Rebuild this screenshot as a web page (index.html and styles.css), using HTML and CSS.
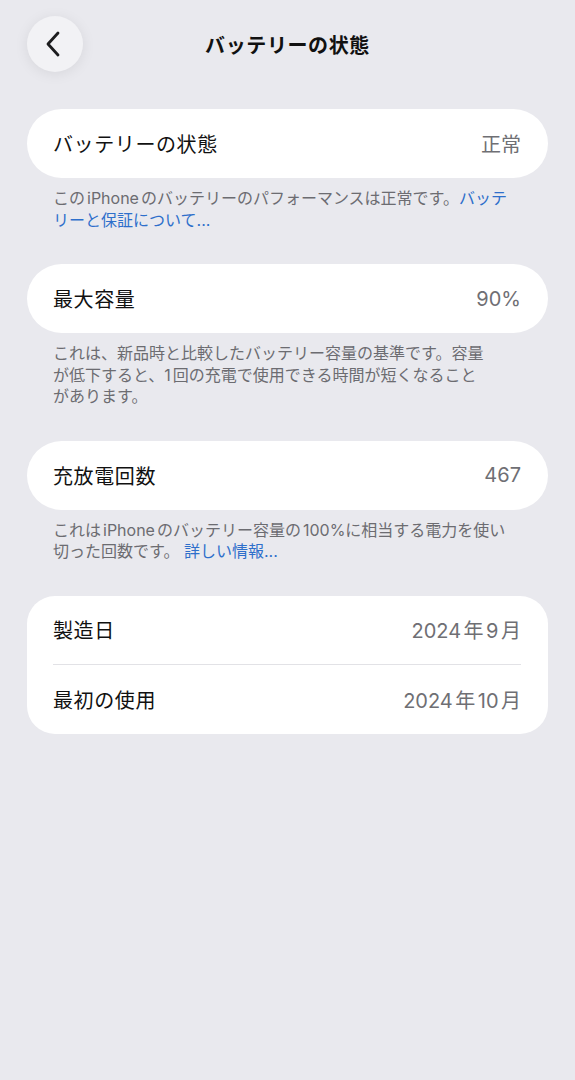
FILE: index.html
```html
<!DOCTYPE html>
<html lang="ja">
<head>
    <meta charset="utf-8">
    <link rel="stylesheet" href="styles.css">
</head>
<body>
    <div class="header">
        <button class="back-btn" type="button">
            <svg width="18" height="26" viewBox="0 0 18 26">
                <path d="M13 2 L3 13 L13 24" fill="none" stroke="#1c1c1e" stroke-width="2.8" stroke-linecap="round" stroke-linejoin="round"/>
            </svg>
        </button>
        <h1 class="title">バッテリーの状態</h1>
    </div>

    <div class="content">
        <div class="card">
            <div class="row">
                <span class="label">バッテリーの状態</span>
                <span class="value">正常</span>
            </div>
        </div>
        <p class="note">このiPhoneのバッテリーのパフォーマンスは正常です。<a href="#">バッテ<br>リーと保証について...</a></p>

        <div class="card">
            <div class="row">
                <span class="label">最大容量</span>
                <span class="value">90%</span>
            </div>
        </div>
        <p class="note">これは、新品時と比較したバッテリー容量の基準です。容量<br>が低下すると、1回の充電で使用できる時間が短くなること<br>があります。</p>

        <div class="card">
            <div class="row">
                <span class="label">充放電回数</span>
                <span class="value">467</span>
            </div>
        </div>
        <p class="note">これはiPhoneのバッテリー容量の100%に相当する電力を使い<br>切った回数です。 <a href="#">詳しい情報...</a></p>

        <div class="card card-group">
            <div class="row">
                <span class="label">製造日</span>
                <span class="value">2024年9月</span>
            </div>
            <div class="row">
                <span class="label">最初の使用</span>
                <span class="value">2024年10月</span>
            </div>
        </div>
    </div>
</body>
</html>
```

FILE: styles.css
```css
body {
    margin: 0;
    background-color: #e9e9ee;
    font-family: Inter, "Noto Sans CJK JP", sans-serif;
    color: #111;
    text-autospace: normal;
}

/* Top bar */
.header {
    position: relative;
    height: 88px;
    display: flex;
    align-items: center;
    justify-content: center;
}

.back-btn {
    position: absolute;
    left: 27px;
    top: 16px;
    width: 56px;
    height: 56px;
    border: none;
    border-radius: 50%;
    background-color: #f2f2f5;
    box-shadow: 0px 2px 14px rgba(0, 0, 0, 0.08);
    display: flex;
    align-items: center;
    justify-content: center;
    padding: 0 3px 0 0;
}

.title {
    margin: 0;
    font-size: 20px;
    font-weight: 700;
    letter-spacing: 0.6px;
}

/* List */
.content {
    padding: 21px 27px 0;
}

.card {
    background-color: white;
    border-radius: 35px;
}

.card-group {
    border-radius: 28px;
}

.row {
    height: 69px;
    display: flex;
    align-items: center;
    justify-content: space-between;
    padding: 0 27px 0 26px;
    font-size: 20px;
}

.label {
    letter-spacing: 0.6px;
}

.card-group .row + .row {
    border-top: 1px solid #e2e2e6;
}

.card-group .row {
    margin: 0 27px 0 26px;
    padding: 0;
}

.card-group .row:first-child {
    height: 68px;
}

.value {
    color: #6f6f74;
}

.note {
    margin: 10px 0 33px 26px;
    font-size: 16px;
    line-height: 21.5px;
    color: #6c6c71;
}

.note a {
    color: #2e6fcb;
    text-decoration: none;
}
```
